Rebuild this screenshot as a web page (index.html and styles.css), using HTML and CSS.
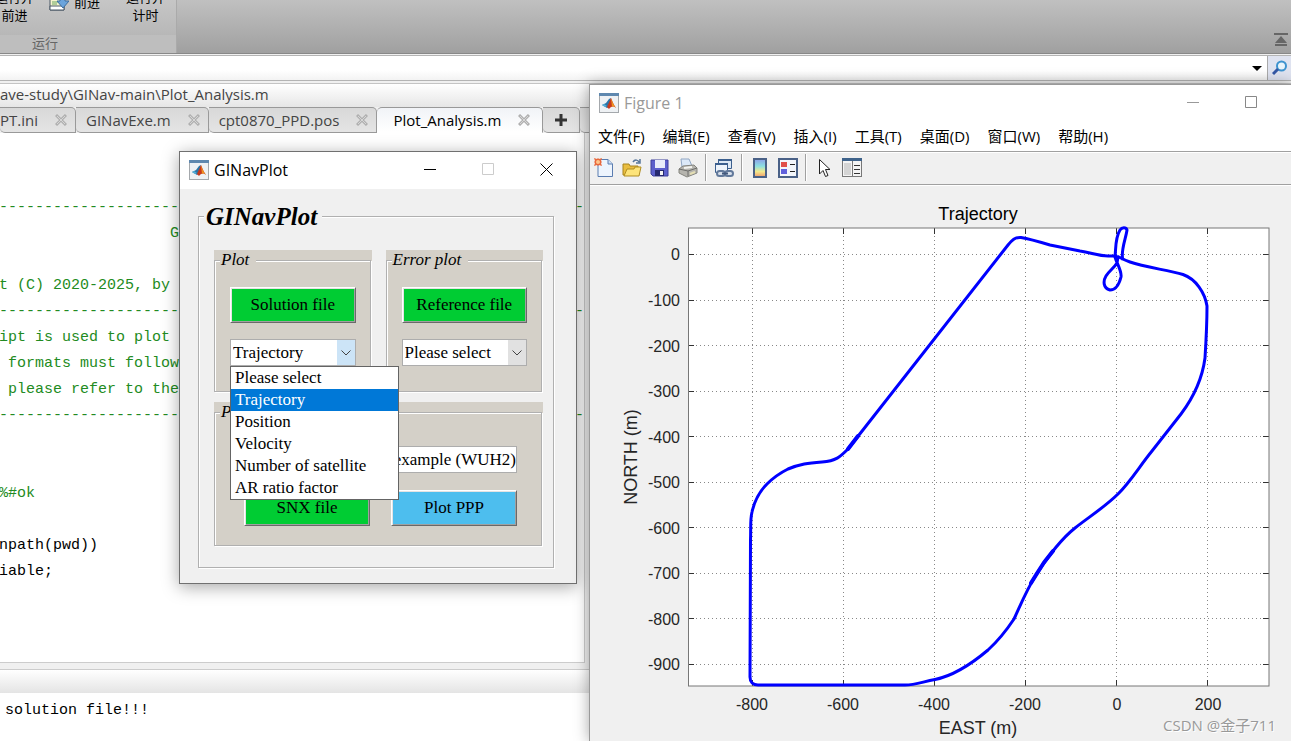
FILE: index.html
```html
<!DOCTYPE html>
<html lang="zh-CN">
<head>
    <meta charset="UTF-8">
    <meta name="viewport" content="width=device-width, initial-scale=1.0">
    <title>GINavPlot</title>
    <link rel="stylesheet" href="styles.css">
</head>
<body>
    <!-- Shared icons -->
    <svg class="sprite" aria-hidden="true">
        <symbol id="matlab" viewBox="0 0 20 20">
            <rect x="0.5" y="0.5" width="19" height="19" fill="#eef1f4" stroke="#a4a8ac"/>
            <rect x="0" y="0" width="20" height="3" fill="#5f88af"/>
            <path d="M3 12 L7 10 L10 6 L12 5 L10 14 L8 15 Z" fill="#2b75a8"/>
            <path d="M3 12 L5 11 L8 13 L6 14 Z" fill="#56b0d8"/>
            <path d="M12 5 C13 7 14 11 17 15 C14 13 13 13 10 16 L8 14 Z" fill="#c8391c"/>
            <path d="M12 5 C13 8 14 11 17 15 C15 13 14 13 13 14 Z" fill="#f0941d"/>
        </symbol>
        <symbol id="close" viewBox="0 0 12 12">
            <path d="M1 1 L11 11 M11 1 L1 11" stroke="#b0b0b0" stroke-width="3"/>
            <path d="M2 2 L10 10 M10 2 L2 10" stroke="#d6d6d6" stroke-width="1"/>
        </symbol>
        <symbol id="chevron" viewBox="0 0 10 6">
            <path d="M0.5 0.5 L5 5 L9.5 0.5" fill="none" stroke="#444"/>
        </symbol>
    </svg>

    <main class="desktop">
        <!-- MATLAB main window -->
        <header class="ribbon">
            <div class="run-group">
                <div class="run-tools">
                    <button class="run-tool run-first">运行并<br>前进</button>
                    <button class="run-tool run-step">
                        <svg width="20" height="20" viewBox="0 0 20 20">
                            <path d="M1 1 H15 V18 H1 Z" fill="#f6f3cd" stroke="#4b5966"/>
                            <path d="M1 14 H15 V18 H1 Z" fill="#fff" stroke="#4b5966"/>
                            <path d="M3 10 H9 M3 12 H8" stroke="#6aa565"/>
                            <path d="M11 5 H16 V9 H20 L14 16 L8 9 H11 Z" fill="#6ba4dc" stroke="#3e6e9f"/>
                        </svg>
                        前进
                    </button>
                    <button class="run-tool run-time">运行并<br>计时</button>
                </div>
                <div class="run-label">运行</div>
            </div>
            <button class="collapse" aria-label="Collapse">
                <svg width="14" height="13" viewBox="0 0 14 13">
                    <path d="M0 1 H14" stroke="#666" stroke-width="2"/>
                    <path d="M7 3 L13 10 H1 Z M1 11 H13 V13 H1 Z" fill="#666"/>
                </svg>
            </button>
        </header>

        <div class="address">
            <input type="text" aria-label="Path">
            <button class="address-drop" aria-label="History">
                <svg width="10" height="5" viewBox="0 0 10 5"><path d="M0 0 H10 L5 5 Z"/></svg>
            </button>
            <button class="address-search" aria-label="Search">
                <svg width="16" height="16" viewBox="0 0 16 16">
                    <circle cx="9.500" cy="6" r="4.500" fill="#e8f4fb" stroke="#3d93cf" stroke-width="2"/>
                    <path d="M6 9 L1 14" stroke="#3457a5" stroke-width="3"/>
                </svg>
            </button>
        </div>

        <section class="editor">
            <div class="editor-title">ave-study\GINav-main\Plot_Analysis.m</div>
            <nav class="tabs">
                <button class="tab">PT.ini <svg width="12" height="12"><use href="#close"/></svg></button>
                <button class="tab">GINavExe.m <svg width="12" height="12"><use href="#close"/></svg></button>
                <button class="tab">cpt0870_PPD.pos <svg width="12" height="12"><use href="#close"/></svg></button>
                <button class="tab active">Plot_Analysis.m <svg width="12" height="12"><use href="#close"/></svg></button>
                <button class="tab add" aria-label="New file">
                    <svg width="12" height="12" viewBox="0 0 12 12"><path d="M6 0 V12 M0 6 H12" stroke="#333" stroke-width="3"/></svg>
                </button>
                <span class="tab rest"></span>
            </nav>
<pre class="code"><span class="comment">

-----------------------------------------------------------------
                   GINavPlot

t (C) 2020-2025, by N
-----------------------------------------------------------------
ipt is used to plot
 formats must follow
 please refer to the
-----------------------------------------------------------------


%#ok</span>

npath(pwd))
iable;</pre>
        </section>

        <section class="command">
            <div class="command-title"></div>
            <pre class="output">solution file!!!</pre>
        </section>

        <!-- GINavPlot dialog -->
        <section class="window dialog">
            <div class="titlebar">
                <svg width="20" height="20"><use href="#matlab"/></svg>
                <span class="title">GINavPlot</span>
                <button aria-label="Minimize"><svg width="13" height="13" viewBox="0 0 13 13"><path d="M0 6.5 H12" stroke="#000"/></svg></button>
                <button aria-label="Maximize" disabled><svg width="13" height="13" viewBox="0 0 13 13"><path d="M0.5 0.5 H11.5 V11.5 H0.5 Z" fill="none" stroke="#ccc"/></svg></button>
                <button aria-label="Close"><svg width="13" height="13" viewBox="0 0 13 13"><path d="M0.5 0.5 L12.5 12.5 M12.5 0.5 L0.5 12.5" stroke="#000"/></svg></button>
            </div>
            <fieldset class="frame outer">
                <legend>GINavPlot</legend>
                <div class="panels">
                    <div class="panel">
                        <fieldset class="frame inner">
                            <legend>Plot</legend>
                            <button class="push green">Solution file</button>
                            <div class="popup open">
                                <select aria-label="Plot type">
                                    <option>Please select</option>
                                    <option selected>Trajectory</option>
                                    <option>Position</option>
                                    <option>Velocity</option>
                                    <option>Number of satellite</option>
                                    <option>AR ratio factor</option>
                                </select>
                                <span class="arrow"><svg width="10" height="6"><use href="#chevron"/></svg></span>
                                <ul class="options">
                                    <li>Please select</li>
                                    <li class="selected">Trajectory</li>
                                    <li>Position</li>
                                    <li>Velocity</li>
                                    <li>Number of satellite</li>
                                    <li>AR ratio factor</li>
                                </ul>
                            </div>
                        </fieldset>
                    </div>
                    <div class="panel">
                        <fieldset class="frame inner">
                            <legend>Error plot</legend>
                            <button class="push green">Reference file</button>
                            <div class="popup">
                                <select aria-label="Error type">
                                    <option>Please select</option>
                                </select>
                                <span class="arrow"><svg width="10" height="6"><use href="#chevron"/></svg></span>
                            </div>
                        </fieldset>
                    </div>
                    <div class="panel wide">
                        <fieldset class="frame inner ppp">
                            <legend>PPP</legend>
                            <input class="station" type="text" value="example (WUH2)" aria-label="Station">
                            <button class="push green">SNX file</button>
                            <button class="push blue">Plot PPP</button>
                        </fieldset>
                    </div>
                </div>
            </fieldset>
        </section>

        <!-- Figure window -->
        <section class="window figure">
            <div class="titlebar">
                <svg width="20" height="20"><use href="#matlab"/></svg>
                <span class="title">Figure 1</span>
                <button aria-label="Minimize"><svg width="13" height="13" viewBox="0 0 13 13"><path d="M0 6.5 H12" stroke="#999"/></svg></button>
                <button aria-label="Maximize"><svg width="13" height="13" viewBox="0 0 13 13"><path d="M0.5 0.5 H11.5 V11.5 H0.5 Z" fill="none" stroke="#888"/></svg></button>
            </div>
            <nav class="menubar">
                <button>文件(F)</button>
                <button>编辑(E)</button>
                <button>查看(V)</button>
                <button>插入(I)</button>
                <button>工具(T)</button>
                <button>桌面(D)</button>
                <button>窗口(W)</button>
                <button>帮助(H)</button>
            </nav>
            <div class="toolbar">
                <button aria-label="New">
                    <svg width="20" height="20" viewBox="0 0 20 20">
                        <path d="M4 1.5 H14 L18.5 6 V18.5 H4 Z" fill="#edf4fd" stroke="#5a7cb0"/>
                        <path d="M14 1.5 V6 H18.5" fill="#cfdff4" stroke="#5a7cb0"/>
                        <path d="M0 0 L3 1 L4 0 L5 1 L8 0 L7 3 L8 4 L7 5 L8 8 L5 7 L4 8 L3 7 L0 8 L1 5 L0 4 L1 3 Z" fill="#e8683c"/>
                        <circle cx="4" cy="4" r="2" fill="#ffc58a"/>
                    </svg>
                </button>
                <button aria-label="Open">
                    <svg width="20" height="20" viewBox="0 0 20 20">
                        <path d="M1 17 V6 H7 L8 8 H16 V17 Z" fill="#e9bd3f" stroke="#a8841c"/>
                        <path d="M2 18 L5 11 H12 L13 9 H19 L17 18 Z" fill="#fde47a" stroke="#b08d21"/>
                        <path d="M11 4 C13 1 16 2 17 4 M18 1 V5 H14" fill="none" stroke="#56759a" stroke-width="1.5"/>
                    </svg>
                </button>
                <button aria-label="Save">
                    <svg width="20" height="20" viewBox="0 0 20 20">
                        <path d="M1 2 H18 V18 H3 L1 16 Z" fill="#5c60cc" stroke="#3c3f9a"/>
                        <path d="M5 2 H15 V10 H5 Z" fill="#e8edfa"/>
                        <path d="M5 12 H14 V18 H5 Z" fill="#25286e"/>
                        <path d="M10 13 H13 V17 H10 Z" fill="#f3f3f3"/>
                    </svg>
                </button>
                <button aria-label="Print">
                    <svg width="20" height="20" viewBox="0 0 20 20">
                        <path d="M4 9 L3 1 H11 L14 8 Z" fill="#dce9f8" stroke="#91a7c4"/>
                        <path d="M1 11 L5 8 L16 7 L19 10 V15 L9 19 L1 15 Z" fill="#b5b4ae" stroke="#85857f"/>
                        <path d="M1 11 L10 13 L19 10 M10 13 V18" fill="none" stroke="#6d6d6b"/>
                        <path d="M6 10 L14 9" stroke="#f4f4f0" stroke-width="2"/>
                        <path d="M12 16 L17 14" stroke="#e5dfb4" stroke-width="2"/>
                    </svg>
                </button>
                <span class="separator"></span>
                <button aria-label="Link plot">
                    <svg width="20" height="20" viewBox="0 0 20 20">
                        <path d="M4.500 1.500 H17.500 V10.500 H4.500 Z" fill="#dce8f5" stroke="#3b5f8e"/>
                        <path d="M4 2 H18" stroke="#3b5f8e" stroke-width="2"/>
                        <path d="M1.500 5.500 H13.500 V14.500 H1.500 Z" fill="#eef4fb" stroke="#3b5f8e"/>
                        <path d="M1 6 H14" stroke="#3b5f8e" stroke-width="2"/>
                        <rect x="3" y="13" width="8" height="5" rx="2.500" fill="#d5deea" stroke="#62799b" stroke-width="2"/>
                        <rect x="11" y="13" width="8" height="5" rx="2.500" fill="#d5deea" stroke="#62799b" stroke-width="2"/>
                        <path d="M8 15.500 H14" stroke="#43597c" stroke-width="2"/>
                    </svg>
                </button>
                <span class="separator"></span>
                <button aria-label="Colorbar">
                    <svg width="20" height="20" viewBox="0 0 20 20">
                        <defs>
                            <linearGradient id="bar" x1="0" y1="0" x2="0" y2="1">
                                <stop offset="0" stop-color="#8d9eea"/>
                                <stop offset="0.4" stop-color="#8ce0e2"/>
                                <stop offset="0.7" stop-color="#f4e98b"/>
                                <stop offset="1" stop-color="#ee9a6e"/>
                            </linearGradient>
                        </defs>
                        <rect x="4" y="1" width="12" height="18" fill="url(#bar)" stroke="#4a6187" stroke-width="2"/>
                    </svg>
                </button>
                <button aria-label="Legend">
                    <svg width="20" height="20" viewBox="0 0 20 20">
                        <rect x="1" y="1" width="18" height="18" fill="#f3f6fb" stroke="#4a6187" stroke-width="2"/>
                        <rect x="3" y="4" width="6" height="5" fill="#e0504a"/>
                        <rect x="3" y="11" width="6" height="5" fill="#5f60dc"/>
                        <path d="M12 6.5 H17 M12 13.5 H17" stroke="#222" stroke-width="1"/>
                    </svg>
                </button>
                <span class="separator"></span>
                <button aria-label="Select">
                    <svg width="20" height="20" viewBox="0 0 20 20">
                        <path d="M5.5 1.5 V16 L9 12.5 L11.5 18.5 L14 17.5 L11.5 11.5 H16 Z" fill="#fff" stroke="#222"/>
                    </svg>
                </button>
                <button aria-label="Inspector">
                    <svg width="20" height="20" viewBox="0 0 20 20">
                        <rect x="0.5" y="1.5" width="19" height="17" fill="#f4f4f4" stroke="#777"/>
                        <rect x="0" y="0" width="20" height="3" fill="#3f638b"/>
                        <rect x="2" y="5" width="7" height="12" fill="#d4d4d4"/>
                        <path d="M10.5 3 V18" stroke="#777"/>
                        <path d="M12 7.5 H18 M12 11.5 H18 M12 15.5 H18" stroke="#333" stroke-width="1"/>
                    </svg>
                </button>
            </div>
            <svg class="chart" viewBox="590 186 701 555" role="img" aria-label="Trajectory">
                <rect x="688" y="228" width="581" height="458" fill="#fff"/>
                <g class="grid">
                    <path d="M752.5 228 V686 M843.5 228 V686 M934.5 228 V686 M1025.5 228 V686 M1116.5 228 V686 M1207.5 228 V686"/>
                    <path d="M688 254.5 H1269 M688 300.5 H1269 M688 345.5 H1269 M688 391.5 H1269 M688 436.5 H1269 M688 482.5 H1269 M688 527.5 H1269 M688 573.5 H1269 M688 618.5 H1269 M688 664.5 H1269"/>
                </g>
                <path class="ticks" d="M752.5 228 v6 M843.5 228 v6 M934.5 228 v6 M1025.5 228 v6 M1116.5 228 v6 M1207.5 228 v6
                    M752.5 686 v-6 M843.5 686 v-6 M934.5 686 v-6 M1025.5 686 v-6 M1116.5 686 v-6 M1207.5 686 v-6
                    M688 254.5 h6 M688 300.5 h6 M688 345.5 h6 M688 391.5 h6 M688 436.5 h6 M688 482.5 h6 M688 527.5 h6 M688 573.5 h6 M688 618.5 h6 M688 664.5 h6
                    M1269 254.5 h-6 M1269 300.5 h-6 M1269 345.5 h-6 M1269 391.5 h-6 M1269 436.5 h-6 M1269 482.5 h-6 M1269 527.5 h-6 M1269 573.5 h-6 M1269 618.5 h-6 M1269 664.5 h-6"/>
                <rect class="axes" x="688.5" y="228" width="580.5" height="458"/>
                <!-- Main lap -->
                <path class="track" d="M1117 256 L1108 256 C1099 256 1092 253 1080 251 L1050 245 C1040 242 1030 239 1021 237.500 C1015 237 1012 240 1008 245
                    L848 449 C840 457 836 461 822 462 C808 463 800 464 788 469
                    C778 474 772 479 767 484 C759 492 754 503 752 512 C750 520 751 527 750.500 540 L750 677 C750 682 753 685 758 685 L905 685
                    C915 685 922 682 935 679.500 C957 675 975 661 988 650 C999 640 1008 628 1014 619 C1021 604 1027 589 1036 575
                    C1045 561 1060 540 1075 528 C1089 517 1106 506 1118 494 C1131 481 1139 467 1152 451 L1181 414
                    C1193 398 1202 381 1205 358 C1206 342 1207 325 1207 306 C1205 293 1196 279 1183 274.500 C1167 270 1145 267 1130 262 C1124 260 1121 258 1117 256"/>
                <!-- Upper and lower loops around the start point -->
                <path class="track" d="M1123 260 C1120 252 1126 238 1127 230 C1126 227 1122 227 1120 230 C1115 238 1116 248 1115 257 C1117 264 1122 271 1121 277 C1119 285 1115 290 1110 290 C1103 288 1103 281 1106 276 C1109 271 1114 268 1117 263 L1118 257"/>
                <path class="track heavy" d="M848 449 L858 436 M1031 583 L1036 575 C1040 568 1046 559 1053 551"/>
                <g class="tick-label y-label">
                    <text x="680" y="260">0</text>
                    <text x="680" y="306">-100</text>
                    <text x="680" y="352">-200</text>
                    <text x="680" y="397">-300</text>
                    <text x="680" y="443">-400</text>
                    <text x="680" y="488">-500</text>
                    <text x="680" y="534">-600</text>
                    <text x="680" y="579">-700</text>
                    <text x="680" y="625">-800</text>
                    <text x="680" y="670">-900</text>
                </g>
                <g class="tick-label x-label">
                    <text x="752" y="710">-800</text>
                    <text x="843" y="710">-600</text>
                    <text x="934" y="710">-400</text>
                    <text x="1025" y="710">-200</text>
                    <text x="1117" y="710">0</text>
                    <text x="1208" y="710">200</text>
                </g>
                <text class="chart-title" x="978" y="220">Trajectory</text>
                <text class="axis-title" x="978" y="734">EAST (m)</text>
                <text class="axis-title" transform="translate(637 457) rotate(-90)">NORTH (m)</text>
            </svg>
            <span class="watermark">CSDN @金子711</span>
        </section>
    </main>
</body>
</html>
```
FILE: styles.css
```css
* {
    box-sizing: border-box;
}

body {
    margin: 0;
    font-family: "Open Sans", "Noto Sans CJK SC", sans-serif;
    font-size: 15px;
    color: #000;
}

button,
input,
select {
    font: inherit;
    color: inherit;
    margin: 0;
    padding: 0;
    border: none;
    background: none;
    border-radius: 0;
}

pre,
ul {
    margin: 0;
    padding: 0;
}

svg {
    display: block;
    flex-shrink: 0;
}

.sprite {
    position: absolute;
    width: 0;
    height: 0;
}

.desktop {
    position: relative;
    display: flex;
    flex-direction: column;
    height: 100vh;
    overflow: hidden;
    background: #f0f0f0;
}

/* Ribbon */
.ribbon {
    display: flex;
    justify-content: space-between;
    align-items: flex-end;
    height: 54px;
    flex-shrink: 0;
    background: linear-gradient(#c0c0c0, #a0a0a0);
    border-bottom: 1px solid #888;
    font-family: "Noto Sans CJK SC", sans-serif;
    font-size: 13px;
    line-height: 18px;
}

.run-group {
    width: 177px;
    border-right: 1px solid #aaa;
    background: linear-gradient(#c6c6c6, #b0b0b0);
}

.run-tools {
    display: flex;
    align-items: flex-end;
    height: 35px;
    overflow: hidden;
}

.run-tool {
    padding-bottom: 11px;
    white-space: nowrap;
}

.run-first {
    margin-left: -5px;
}

.run-step {
    display: flex;
    align-items: center;
    gap: 5px;
    margin-left: 15px;
    padding-bottom: 23px;
}

.run-time {
    margin-left: 26px;
}

.run-label {
    height: 18px;
    line-height: 15px;
    padding-left: 32px;
    background: #bebebe;
    color: #666;
}

.collapse {
    padding: 0 3px 7px;
}

/* Address bar */
.address {
    display: flex;
    height: 26px;
    flex-shrink: 0;
    margin-top: 1px;
    border-top: 1px solid #b4b4b4;
    border-bottom: 1px solid #b4b4b4;
    background: linear-gradient(#fff 60%, #f3f3f3);
}

.address input {
    flex: 1;
    outline: none;
}

.address-drop {
    padding: 0 5px;
}

.address-search {
    display: flex;
    align-items: center;
    width: 24px;
    padding-left: 4px;
    border-left: 1px solid #aaa;
    background: #dfe3f0;
}

/* Editor */
.editor {
    display: flex;
    flex-direction: column;
    flex: 1;
    min-height: 0;
    margin-top: 2px;
    border-top: 1px solid #c4c4c4;
}

.editor-title {
    height: 23px;
    line-height: 21px;
    background: linear-gradient(#fff, #e6e6e6);
    color: #444;
}

.tabs {
    display: flex;
    height: 26px;
    background: #f0f0f0;
}

.tab {
    display: flex;
    align-items: center;
    gap: 17px;
    height: 26px;
    padding: 0 8px 1px 10px;
    border: 1px solid #999;
    border-left-width: 0;
    border-radius: 0 5px 0 5px;
    background: linear-gradient(#d8d8d8, #e4e4e4);
    color: #444;
}

.tab:first-child {
    padding-left: 0;
}

.tab.active {
    padding: 0 12px 1px 16px;
    border-color: #999 #999 #fff;
    border-radius: 5px 5px 0 0;
    background: linear-gradient(#f1f3f7, #fff);
    color: #000;
}

.tab.add {
    padding: 0 12px;
}

.tab.rest {
    flex: 1;
}

.code {
    flex: 1;
    min-height: 0;
    width: 586px;
    padding: 10px 0 0;
    margin-left: -1px;
    overflow: hidden;
    border-right: 1px solid #ccc;
    border-bottom: 1px solid #ccc;
    background: #fff;
}

.code,
.output {
    font-family: "Liberation Mono", monospace;
    font-size: 15px;
    line-height: 26px;
}

.comment {
    color: #228b22;
}

/* Command window */
.command {
    height: 72px;
    flex-shrink: 0;
    margin-top: 6px;
    border-top: 1px solid #ccc;
    background: #fff;
}

.command-title {
    height: 23px;
    background: linear-gradient(#fff, #e4e4e4);
}

.output {
    padding: 5px;
}

/* Windows on the desktop */
.window {
    position: absolute;
    background: #f0f0f0;
}

.titlebar {
    display: flex;
    align-items: center;
    height: 37px;
    padding: 0 1px 2px 9px;
    background: #fff;
}

.titlebar .title {
    flex: 1;
    padding-left: 5px;
    font-size: 16px;
}

.titlebar button {
    display: flex;
    justify-content: center;
    width: 58px;
}

.dialog {
    left: 179px;
    top: 151px;
    width: 398px;
    padding-bottom: 15px;
    border: 1px solid #707070;
    box-shadow: 0 3px 16px rgba(0, 0, 0, 0.35);
    font-size: 17px;
}

.frame {
    min-width: 0;
    margin: 0;
    padding: 0;
    border: 1px solid #b0b0b0;
    box-shadow: 1px 1px 0 #fff, inset 1px 1px 0 #fff;
    font-family: "Liberation Serif", serif;
}

.outer {
    margin: 13px 22px 0 18px;
    padding: 19px 10px 21px 15px;
}

.outer > legend {
    margin-left: -10px;
    padding: 0 5px 0 2px;
    background: #f0f0f0;
    font-size: 25px;
    font-weight: bold;
    font-style: italic;
    line-height: 29px;
}

.panels {
    display: grid;
    grid-template-columns: repeat(2, minmax(0, 1fr));
    gap: 10px 14px;
}

.panel {
    padding-right: 1px;
    background: #d4d0c8;
}

.wide {
    grid-column: span 2;
}

.inner {
    padding: 17px 14px 25px 15px;
}

.inner > legend {
    margin-left: -10px;
    padding: 0 7px 0 1px;
    background: #d4d0c8;
    font-style: italic;
    line-height: 20px;
}

.push {
    display: block;
    width: 100%;
    height: 36px;
    border: 1px solid;
    border-color: #fff #696969 #696969 #fff;
    box-shadow: inset 1px 1px 0 #e3e3e3, inset -1px -1px 0 #a0a0a0;
    line-height: 34px;
}

.green {
    background: #00cc33;
}

.blue {
    background: #4dbeee;
}

.popup {
    position: relative;
    display: flex;
    height: 27px;
    margin-top: 16px;
    border: 1px solid #adadad;
    background: #fff;
}

.popup select {
    flex: 1;
    min-width: 0;
    padding-left: 2px;
    appearance: none;
    outline: none;
}

.arrow {
    display: flex;
    align-items: center;
    justify-content: center;
    width: 18px;
    background: #e1e1e1;
    pointer-events: none;
}

.open .arrow {
    background: #cce4f7;
}

.options {
    position: absolute;
    z-index: 2;
    left: -1px;
    top: 26px;
    width: 169px;
    border: 1px solid #646464;
    background: #fff;
    list-style: none;
    line-height: 22px;
}

.options li {
    padding-left: 4px;
}

.options .selected {
    background: #0078d7;
    color: #fff;
}

.ppp {
    display: grid;
    grid-template-columns: repeat(2, minmax(0, 1fr));
    gap: 17px 21px;
    padding: 24px 24px 19px 29px;
}

.ppp > legend {
    margin-left: -24px;
}

.station {
    grid-column: 2;
    width: 100%;
    height: 27px;
    border: 1px solid #adadad;
    background: #fff;
    text-align: right;
}

/* Figure window */
.figure {
    left: 589px;
    right: 0;
    top: 84px;
    bottom: 0;
    border-top: 1px solid #999;
    border-left: 1px solid #999;
    box-shadow: 0 0 14px rgba(0, 0, 0, 0.35);
}

.figure .titlebar {
    padding-right: 11px;
    color: #999;
}

.menubar {
    display: flex;
    gap: 18px;
    height: 30px;
    padding: 0 8px 2px;
    border-bottom: 1px solid #a0a0a0;
    background: #fff;
}

.toolbar {
    display: flex;
    align-items: center;
    gap: 8px;
    height: 33px;
    padding: 0 4px 2px;
    border-top: 1px solid #fff;
    border-bottom: 1px solid #a0a0a0;
}

.separator {
    width: 2px;
    height: 27px;
    margin: 0 -1px;
    border-left: 1px solid #a0a0a0;
    border-right: 1px solid #fff;
}

.chart {
    width: 100%;
    border-top: 1px solid #fff;
    font-family: "Liberation Sans", Arial, sans-serif;
}

.grid {
    fill: none;
    stroke: #888;
    stroke-dasharray: 1 3;
}

.ticks {
    stroke: #333;
}

.axes {
    fill: none;
    stroke: #777;
}

.track {
    fill: none;
    stroke: #0000ff;
    stroke-width: 3;
    stroke-linejoin: round;
}

.heavy {
    stroke-width: 4;
    stroke-linecap: round;
}

.tick-label {
    font-size: 16px;
    fill: #262626;
}

.y-label {
    text-anchor: end;
}

.x-label,
.chart-title,
.axis-title {
    text-anchor: middle;
}

.chart-title,
.axis-title {
    font-size: 18px;
}

.axis-title {
    fill: #262626;
}

.watermark {
    position: absolute;
    right: 15px;
    bottom: 6px;
    font-size: 15px;
    line-height: 20px;
    color: #999;
    text-shadow: 1px 1px 0 #fff;
}
```
